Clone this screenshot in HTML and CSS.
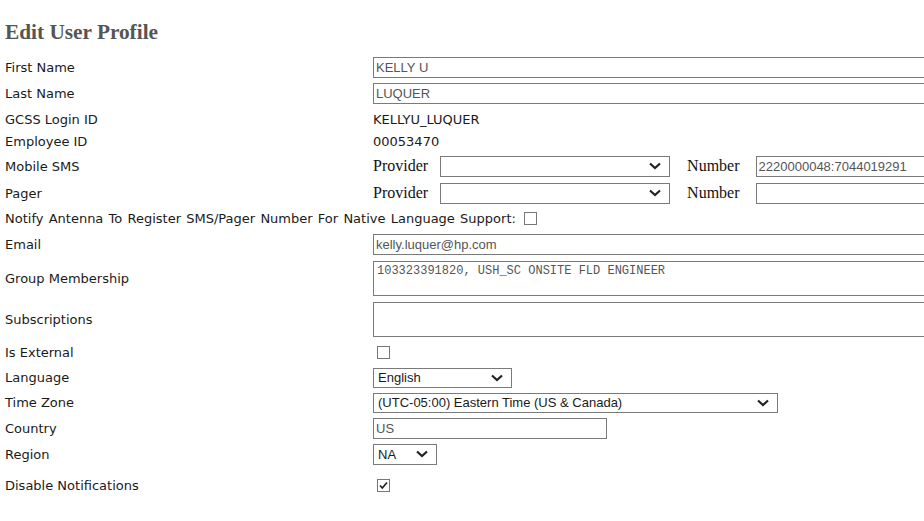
FILE: index.html
```html
<!DOCTYPE html>
<html>
<head>
<meta charset="utf-8">
<title>Edit User Profile</title>
<link rel="stylesheet" href="styles.css">
</head>
<body>
<div class="page">
  <h1 class="title">Edit User Profile</h1>
  <div class="form">
    <div class="row h26"><div class="label">First Name</div><div class="field"><input class="text wide" type="text" value="KELLY U"></div></div>
    <div class="row h27"><div class="label">Last Name</div><div class="field"><input class="text wide" type="text" value="LUQUER"></div></div>
    <div class="row h24"><div class="label">GCSS Login ID</div><div class="field value">KELLYU_LUQUER</div></div>
    <div class="row h21"><div class="label">Employee ID</div><div class="field value">00053470</div></div>
    <div class="row h28"><div class="label">Mobile SMS</div>
      <div class="field pair">
        <span class="serif-label">Provider</span>
        <div class="select provider"><span></span><svg class="chev" width="12" height="8" viewBox="0 0 12 8"><path d="M1 1.5 L6 6 L11 1.5" fill="none" stroke="#222" stroke-width="2.2"/></svg></div>
        <span class="serif-label num">Number</span>
        <input class="text number" type="text" value="2220000048:7044019291">
      </div>
    </div>
    <div class="row h26"><div class="label">Pager</div>
      <div class="field pair">
        <span class="serif-label">Provider</span>
        <div class="select provider"><span></span><svg class="chev" width="12" height="8" viewBox="0 0 12 8"><path d="M1 1.5 L6 6 L11 1.5" fill="none" stroke="#222" stroke-width="2.2"/></svg></div>
        <span class="serif-label num">Number</span>
        <input class="text number" type="text" value="">
      </div>
    </div>
    <div class="row-full h25"><span class="label notify-label">Notify Antenna To Register SMS/Pager Number For Native Language Support:</span><span class="box notify"></span></div>
    <div class="row h26"><div class="label">Email</div><div class="field"><input class="text wide" type="text" value="kelly.luquer@hp.com"></div></div>
    <div class="row h42"><div class="label">Group Membership</div><div class="field"><textarea class="area" readonly>103323391820, USH_SC ONSITE FLD ENGINEER</textarea></div></div>
    <div class="row h40"><div class="label">Subscriptions</div><div class="field"><textarea class="area" readonly></textarea></div></div>
    <div class="row h26"><div class="label">Is External</div><div class="field"><span class="box inset"></span></div></div>
    <div class="row h25"><div class="label">Language</div><div class="field"><div class="select lang"><span>English</span><svg class="chev" width="12" height="8" viewBox="0 0 12 8"><path d="M1 1.5 L6 6 L11 1.5" fill="none" stroke="#222" stroke-width="2.2"/></svg></div></div></div>
    <div class="row h25"><div class="label">Time Zone</div><div class="field"><div class="select tz"><span>(UTC-05:00) Eastern Time (US &amp; Canada)</span><svg class="chev" width="12" height="8" viewBox="0 0 12 8"><path d="M1 1.5 L6 6 L11 1.5" fill="none" stroke="#222" stroke-width="2.2"/></svg></div></div></div>
    <div class="row h26"><div class="label">Country</div><div class="field"><input class="text country" type="text" value="US"></div></div>
    <div class="row h26"><div class="label">Region</div><div class="field"><div class="select region"><span>NA</span><svg class="chev" width="12" height="8" viewBox="0 0 12 8"><path d="M1 1.5 L6 6 L11 1.5" fill="none" stroke="#222" stroke-width="2.2"/></svg></div></div></div>
    <div class="row h36"><div class="label">Disable Notifications</div><div class="field"><span class="box inset"><svg width="11" height="11" viewBox="0 0 11 11"><path d="M2 5.5 L4.3 8 L9 2.5" fill="none" stroke="#222" stroke-width="1.7"/></svg></span></div></div>
  </div>
</div>
</body>
</html>
```
FILE: styles.css
```css
html, body {
  margin: 0;
  padding: 0;
  background: #ffffff;
}
.page {
  padding: 20px 0 0 5px;
  font-family: "DejaVu Sans", Verdana, sans-serif;
  font-size: 13px;
  color: #1a1a1a;
  overflow: hidden;
}
.title {
  margin: 0 0 10px 0;
  height: 24px;
  line-height: 24px;
  font-family: "Liberation Serif", "Times New Roman", serif;
  font-weight: bold;
  font-size: 21.3px;
  color: #555555;
}
.row {
  display: grid;
  grid-template-columns: 368px 1fr;
  align-items: center;
}
.row-full {
  display: flex;
  align-items: center;
}
.h21 { height: 21px; }
.h24 { height: 24px; }
.h25 { height: 25px; }
.h26 { height: 26px; }
.h27 { height: 27px; }
.h28 { height: 28px; }
.h36 { height: 36px; }
.h40 { height: 40px; }
.h42 { height: 42px; }
.label {
  white-space: nowrap;
}
.notify-label {
  word-spacing: 1.1px;
}
.field {
  display: flex;
  align-items: center;
  white-space: nowrap;
}
.value {
  color: #1a1a1a;
}
.text {
  box-sizing: border-box;
  height: 21px;
  margin: 0;
  padding: 0 2px;
  border: 1px solid #7a7a7a;
  border-radius: 0;
  font-family: "Liberation Sans", Arial, sans-serif;
  font-size: 13px;
  color: #555555;
  background: #fff;
  outline: none;
}
.wide { width: 600px; }
.country { width: 234px; }
.number { width: 200px; }
.serif-label {
  font-family: "Liberation Serif", "Times New Roman", serif;
  font-size: 16px;
  color: #111;
}
.provider { margin-left: 12px; width: 230px; }
.num { margin-left: 17px; margin-right: 16px; }
.select {
  box-sizing: border-box;
  height: 21px;
  display: flex;
  align-items: center;
  justify-content: space-between;
  padding: 0 8px 0 4px;
  border: 1px solid #7a7a7a;
  background: #fff;
  font-family: "Liberation Sans", Arial, sans-serif;
  font-size: 13px;
  color: #1a1a1a;
}
.lang { width: 139px; height: 20px; }
.tz { width: 405px; height: 20px; }
.region { width: 64px; }
.chev { display: block; flex: none; }
.area {
  box-sizing: border-box;
  display: block;
  width: 600px;
  height: 35px;
  margin: 0;
  padding: 2px 3px;
  border: 1px solid #7a7a7a;
  border-radius: 0;
  resize: none;
  font-family: "Liberation Mono", "Courier New", monospace;
  font-size: 12px;
  color: #555555;
  outline: none;
  overflow: hidden;
}
.box {
  box-sizing: border-box;
  display: inline-flex;
  align-items: center;
  justify-content: center;
  width: 13px;
  height: 13px;
  border: 1px solid #777777;
  background: #fff;
}
.box svg { display: block; }
.notify { margin-left: 8px; }
.inset { margin-left: 4px; }
```
